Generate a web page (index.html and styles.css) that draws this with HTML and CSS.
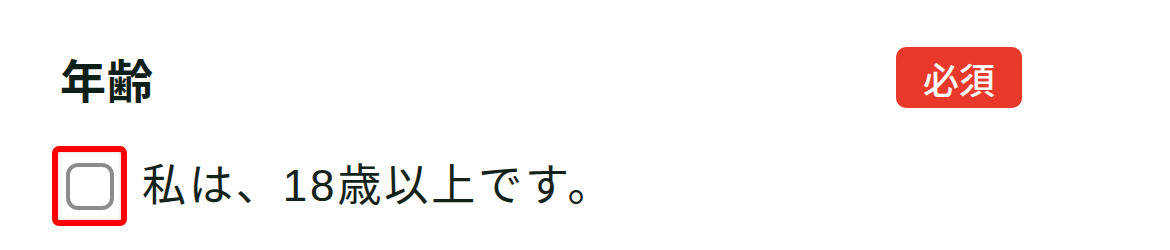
FILE: index.html
```html
<!DOCTYPE html>
<html lang="ja">
<head>
<meta charset="utf-8">
<link rel="stylesheet" href="styles.css">
</head>
<body>
<div class="field">
  <div class="field-head">
    <h2 class="field-title">年齢</h2>
    <span class="badge">必須</span>
  </div>
  <label class="check-row">
    <span class="highlight"><span class="checkbox"></span></span>
    <span class="check-text">私は、18歳以上です。</span>
  </label>
</div>
</body>
</html>
```

FILE: styles.css
```css
html, body {
  margin: 0;
  padding: 0;
  background: #ffffff;
}
body {
  font-family: "Noto Sans CJK JP", "Noto Sans", sans-serif;
  color: #13231a;
}
.field {
  width: 962px;
  padding: 47px 0 0 60px;
}
.field-head {
  display: flex;
  align-items: center;
  justify-content: space-between;
  height: 61px;
}
.field-title {
  margin: 0;
  font-size: 46px;
  font-weight: 700;
  line-height: 1;
  letter-spacing: 1px;
  color: #0f2018;
}
.badge {
  display: flex;
  align-items: center;
  justify-content: center;
  width: 126px;
  height: 61px;
  box-sizing: border-box;
  background: #e8392b;
  color: #ffffff;
  border-radius: 10px;
  font-size: 36px;
  font-weight: 500;
  line-height: 1;
}
.check-row {
  display: flex;
  align-items: center;
  margin-top: 38px;
  margin-left: -8px;
}
.highlight {
  display: flex;
  align-items: center;
  justify-content: center;
  width: 75px;
  height: 80px;
  box-sizing: border-box;
  border: 6px solid #ff0000;
  border-radius: 7px;
  box-shadow: inset 0 0 4px rgba(0,0,0,0.15);
}
.checkbox {
  display: block;
  width: 48px;
  height: 47px;
  box-sizing: border-box;
  border: 4px solid #8c8c8c;
  border-radius: 12px;
  background: #ffffff;
}
.check-text {
  margin-left: 15px;
  font-family: "Liberation Sans", "Noto Sans CJK JP", sans-serif;
  font-size: 44px;
  font-weight: 400;
  line-height: 1;
  letter-spacing: 2.9px;
  color: #13231a;
}
```
